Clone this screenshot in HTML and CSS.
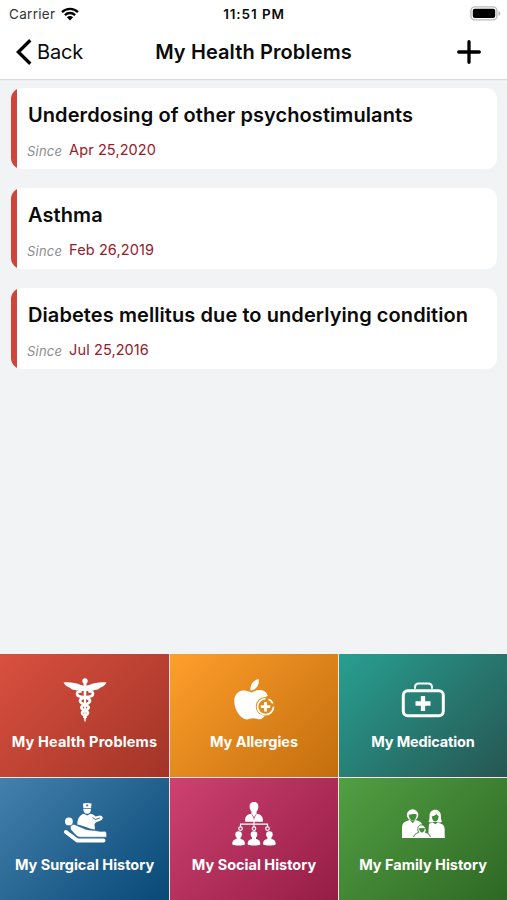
FILE: index.html
```html
<!DOCTYPE html>
<html lang="en">

<head>
    <meta charset="utf-8" />
    <meta name="viewport" content="width=device-width" />
    <title>My Health Problems</title>
    <link rel="stylesheet" href="styles.css">
</head>
<body>
    <!-- Header start -->
    <header class="header">
        <div class="status-bar">
            <div class="status-left">
                <span class="carrier">Carrier</span>
                <svg class="wifi" width="18" height="14" viewBox="0 0 18 14">
                    <path d="M1 5.1a11.5 11.5 0 0 1 16 0M3.9 8.1a7.3 7.3 0 0 1 10.2 0" fill="none" stroke="#000" stroke-width="2.3" />
                    <path d="M9 13.4L5.9 10.2a4.4 4.4 0 0 1 6.2 0z" />
                </svg>
            </div>
            <span class="clock">11:51 PM</span>
            <svg class="battery" width="31" height="15" viewBox="0 0 31 15">
                <rect x=".9" y=".9" width="26" height="13" rx="4" fill="#fff" stroke="#b9b9b9" stroke-width="1.4" />
                <rect x="2.8" y="2.8" width="22.4" height="9.3" rx="2" />
                <path d="M28.5 5q1.9.8 1.9 2.5t-1.9 2.5z" fill="#b9b9b9" />
            </svg>
        </div>
        <nav class="nav-bar">
            <a class="back">
                <svg width="16" height="26" viewBox="0 0 16 26">
                    <path d="M14.3 1.2L2.3 13l12 11.8" fill="none" stroke="#000" stroke-width="3.3" />
                </svg>
                <span>Back</span>
            </a>
            <h1 class="nav-title">My Health Problems</h1>
            <a class="add">
                <svg width="24" height="24" viewBox="0 0 24 24">
                    <path d="M12 1.7v20.6M1.7 12h20.6" fill="none" stroke="#000" stroke-width="3.3" stroke-linecap="round" />
                </svg>
            </a>
        </nav>
    </header>
    <!-- Header end -->

    <main class="problem-list">
        <article class="problem">
            <h2>Underdosing of other psychostimulants</h2>
            <p><em>Since</em><span>Apr 25,2020</span></p>
        </article>
        <article class="problem">
            <h2>Asthma</h2>
            <p><em>Since</em><span>Feb 26,2019</span></p>
        </article>
        <article class="problem">
            <h2>Diabetes mellitus due to underlying condition</h2>
            <p><em>Since</em><span>Jul 25,2016</span></p>
        </article>
    </main>

    <!-- Menu start -->
    <footer class="menu">
        <a class="tile tile-problems">
            <svg class="icon" viewBox="0 0 44 44">
                <path d="M.5 4.500c6-.6 12.500.3 17.500 2.500l4 1 4-1c5-2.200 11.500-3.100 17.500-2.500-1.500 3.200-4 4.500-6.500 5.200-1 1.600-3.200 2.200-5 2.300-2 .8-4.200.9-6.700.9h-6.600c-2.500 0-4.700-.1-6.700-.9-1.800-.1-4-.7-5-2.300C4.500 9 2 7.700.5 4.500z" />
                <circle cx="22" cy="3" r="2.700" />
                <path d="M20.500 5h3l-.8 38.500h-1.400z" />
                <g fill="none" stroke="#fff" stroke-width="2.700" stroke-linecap="round">
                    <path d="M17.500 13.500c-4.500-.5-4.500 4.300-.5 5 4.500.8 10 1.100 10 4.600 0 3.600-8.700 3-8.700 6.400 0 3 6.700 2.700 6.700 5.500 0 2-3.500 2.300-3.700 4.200" />
                    <path d="M26.500 13.500c4.500-.5 4.500 4.300.5 5-4.500.8-10 1.100-10 4.600 0 3.600 8.700 3 8.700 6.400 0 3-6.700 2.700-6.700 5.500 0 2 3.500 2.300 3.700 4.200" />
                </g>
            </svg>
            <span>My Health Problems</span>
        </a>
        <a class="tile tile-allergies">
            <svg class="icon" viewBox="0 0 44 44">
                <path d="M18.500 12.500C18 6 21.500 2 26.800 1c.6 6-2.500 11-8.300 11.500z" />
                <path d="M19.500 14.500c3-1.500 6-2.600 9-2.400 3.300.1 6 1.900 7.300 5.600-3.800 1.500-4.800 4-4.500 7.500.3 3.500 1.800 5.500 4.200 6.500-1.400 4.200-2.800 7.500-5.800 9.100-2.800 1.400-5.500-.6-8.500-.6-3.200 0-5.500 2-8.500.8C7.500 39.200 3.300 32.300 2.400 25.500c-1-7.300 2.800-12.600 8.600-13 3.700-.2 6 1 8.500 2z" />
                <circle cx="33.300" cy="28.500" r="9.500" fill="#e18b1f" />
                <path d="M33.500 20.700a8 8 0 1 0 8 8M36.500 21.300a8 8 0 0 1 4.300 4" fill="none" stroke="#fff" stroke-width="1.700" />
                <path d="M33.500 24v9.400M28.800 28.700h9.400" fill="none" stroke="#fff" stroke-width="2.800" />
            </svg>
            <span>My Allergies</span>
        </a>
        <a class="tile tile-medication">
            <svg class="icon" viewBox="0 0 44 44">
                <rect x="2.300" y="12.700" width="40" height="25" rx="4.500" fill="none" stroke="#fff" stroke-width="3" />
                <path d="M14 10.700V9.600q0-4 4-4h9q4 0 4 4v1.100" fill="none" stroke="#fff" stroke-width="2" />
                <path d="M22 18v15M14.500 25.500h15" stroke="#fff" stroke-width="4.300" />
            </svg>
            <span>My Medication</span>
        </a>
        <a class="tile tile-surgical">
            <svg class="icon" viewBox="0 0 44 44">
                <path d="M20 1.500q4-1 8.500 0l-.4 4.500h-7.700zM20.300 6.800h7.600c.3 3-1.300 5-3.700 5s-4.100-2-3.900-5z" />
                <path d="M24.200 2.200v2.400M23 3.400h2.400" stroke="#2b6795" stroke-width=".8" />
                <path d="M20.800 11.700l3.400 1.700 3.300-1.700c2.200.5 3.900 1.400 5 2.800l3.500-.8c3.500-.9 5.500 3.400 1.500 4.900l-4.800 2-1.200 1.600.5 5.300c-6-.3-11-4-17.800-5 .5-6 2.100-9.500 6.600-10.800z" />
                <path d="M29.500 15.500l3 2 4.500-1.500" fill="none" stroke="#2b6795" stroke-width=".9" />
                <circle cx="5.900" cy="19.400" r="3.900" />
                <path d="M2.900 30l11.600 8.600h26" fill="none" stroke="#fff" stroke-width="4" stroke-linecap="round" stroke-linejoin="round" />
                <path d="M7.800 27.500c-1.500-3.500 1.200-5.600 4.200-4.800l10.500 4.500c4 1.300 8 .6 12.300 1.800 2.500.6 4.500.4 6.500.3 1.700 0 2.500 1.500 2.300 3v2.900H17c-3.500-.2-6.700-4.700-9.200-7.700z" stroke="#2b6795" stroke-width=".6" />
            </svg>
            <span>My Surgical History</span>
        </a>
        <a class="tile tile-social">
            <svg class="icon" viewBox="0 0 44 44">
                <defs>
                    <g id="member">
                        <circle cx="0" cy="3" r="3.300" />
                        <path d="M-2 4.500h4v3c2.700.7 4.300 1.500 4.300 5.200 0 1.700-12.600 1.700-12.600 0 0-3.700 1.600-4.500 4.300-5.200z" />
                    </g>
                </defs>
                <path d="M22 0c5 0 4.800 5 3.800 7.600-.4 1.100-.8 1.800-1.300 2.200v2c3.500.6 6.500 1.800 6.500 6.900 0 .6-.4 1-1 1H14c-.6 0-1-.4-1-1 0-5.100 3-6.300 6.500-6.900v-2c-.5-.4-.9-1.100-1.300-2.200C17.200 5 17 0 22 0z" />
                <path d="M19.700 12.200l2.300 3.600 2.300-3.600M22 14.500v3" fill="none" stroke="#b93561" stroke-width=".7" />
                <path d="M22 19v6M8.500 25v-2.800h27V25" fill="none" stroke="#fff" stroke-width="1.200" />
                <g fill="none" stroke="#fff" stroke-width="1.200">
                    <circle cx="8.500" cy="26.600" r="1.800" />
                    <circle cx="22" cy="26.600" r="1.800" />
                    <circle cx="35.500" cy="26.600" r="1.800" />
                </g>
                <use href="#member" x="6.600" y="29.500" />
                <use href="#member" x="22" y="29.500" />
                <use href="#member" x="37.400" y="29.500" />
            </svg>
            <span>My Social History</span>
        </a>
        <a class="tile tile-family">
            <svg class="icon" viewBox="0 0 44 44">
                <circle cx="11.600" cy="13" r="5.700" />
                <path d="M7.700 12.700c2.800-.2 5-1 6.800-.6.700.2 1 .5 1.300.9-.3 3-2 5.600-4 5.600s-3.900-2.800-4.100-5.900z" fill="#438c38" />
                <path d="M8.800 18l2.900 3 2.900-3c4.600 1.200 6 2.200 6.500 5.200l-2 12.800H1v-9.500C1 20.500 4 19.500 8.800 18z" />
                <path d="M27.500 19.400c1-1.700 1-3.400 1-5.500 0-4 2.300-6.200 5.700-6.200s5.700 2.300 5.700 6.200c0 2.100.1 3.800 1.100 5.500-1.500 1.500-4 1.400-5.500.5h-2.600c-1.800.9-4 1-5.400-.5z" />
                <path d="M30.800 14.400c2.300-.2 3.800-1.200 4.600-2.400.6 1.100 1.300 1.800 2.300 2.300-.2 3-1.600 5.300-3.400 5.300s-3.300-2.200-3.500-5.200z" fill="#438c38" />
                <path d="M28 21.800c1-.5 2.200-.7 3.700-1l2.600 1.300 2.600-1.300c5 1.100 6.800 2.600 6.800 7.200v8H27z" />
                <path d="M12.500 36c.2-3 1.800-4.600 5.200-5.500-4-9 6.800-10.500 7.500-1.700-.2.600-.5 1.200-.8 1.700 3.500.8 4.800 2.400 5.100 5.500z" stroke="#438c38" stroke-width="1" />
                <path d="M18 26.200l5.800-.3c-.2 2.900-1.400 4.500-2.800 4.500s-2.800-1.500-3-4.200z" fill="#438c38" />
                <path d="M1 35.500h42.700" stroke="#fff" />
            </svg>
            <span>My Family History</span>
        </a>
    </footer>
    <!-- Menu end -->
</body>

</html>
```

FILE: styles.css
```css
:root {
    --page-color: #f1f3f5;
    --accent-color: #cf4638;
    --date-color: #94202a;
    --font-family: Inter, 'Liberation Sans', sans-serif;
}

* {
    box-sizing: border-box;
    margin: 0;
    padding: 0;
}

body {
    display: flex;
    flex-direction: column;
    height: 900px;
    background-color: var(--page-color);
    font-family: var(--font-family);
    color: #0b0b0b;
    white-space: nowrap;
    overflow: hidden;
}

.header {
    height: 79px;
    flex: none;
    background-color: #fff;
    box-shadow: 0 1px 1px #d9dadc;
}

.status-bar {
    display: grid;
    grid-template-columns: 1fr auto 1fr;
    align-items: center;
    height: 27px;
    padding: 0 6px 0 7px;
}

.status-left {
    display: flex;
    align-items: center;
    gap: 6px;
    padding-left: 2px;
}

.carrier {
    font-size: 13.5px;
    color: #333;
    letter-spacing: .3px;
}

.clock {
    font-size: 13.5px;
    font-weight: 600;
    letter-spacing: .9px;
}

.battery {
    justify-self: end;
}

.nav-bar {
    display: grid;
    grid-template-columns: 1fr auto 1fr;
    align-items: center;
    height: 50px;
    padding: 0 16px;
}

.back {
    display: flex;
    align-items: center;
    gap: 5px;
    font-size: 20px;
    letter-spacing: -.2px;
}

.nav-title {
    font-size: 20px;
    font-weight: 600;
    letter-spacing: .1px;
}

.add {
    justify-self: end;
    height: 24px;
    margin-right: 10px;
}

/* Problem cards */
.problem-list {
    flex: 1;
    display: flex;
    flex-direction: column;
    gap: 19px;
    padding: 9px 10px 0 11px;
}

.problem {
    height: 81px;
    padding: 14px 0 0 16px;
    background: linear-gradient(90deg, var(--accent-color) 6px, #fff 6px);
    border-radius: 11px;
}

.problem h2 {
    font-size: 20px;
    font-weight: 600;
    line-height: 26px;
    padding-left: 1px;
    letter-spacing: .08px;
}

.problem p {
    display: flex;
    align-items: center;
    gap: 7px;
    margin-top: 10px;
    line-height: 20px;
}

.problem em {
    padding-top: 3px;
    font-size: 13px;
    letter-spacing: .2px;
    color: #8d8d8d;
}

.problem span {
    font-size: 14.5px;
    letter-spacing: .1px;
    color: var(--date-color);
}

/* Bottom menu */
.menu {
    flex: none;
    display: grid;
    grid-template-columns: 169px 168px 168px;
    grid-template-rows: 123px 122px;
    gap: 1px;
    height: 246px;
    background-color: #f3e6e0;
}

.tile {
    display: flex;
    flex-direction: column;
    align-items: center;
    padding-top: 24px;
    color: #fff;
    font-size: 14.5px;
    font-weight: 700;
}

.icon {
    width: 44px;
    height: 44px;
    fill: #fff;
}

.tile span {
    margin-top: 10px;
    line-height: 20px;
}

.tile-problems {
    background: linear-gradient(135deg, #d9503f, #a23427);
    letter-spacing: .15px;
}

.tile-allergies {
    background: linear-gradient(135deg, #ff9f2c, #c26d0d);
    letter-spacing: -.05px;
}

.tile-medication {
    background: linear-gradient(135deg, #289f91, #265652);
    letter-spacing: -.15px;
}

.tile-surgical {
    background: linear-gradient(135deg, #4480ad, #084977);
}

.tile-social {
    background: linear-gradient(135deg, #ce4170, #951d45);
}

.tile-family {
    background: linear-gradient(135deg, #529f43, #2e6824);
}

.tile-surgical span,
.tile-social span,
.tile-family span {
    margin-top: 9px;
}
```
